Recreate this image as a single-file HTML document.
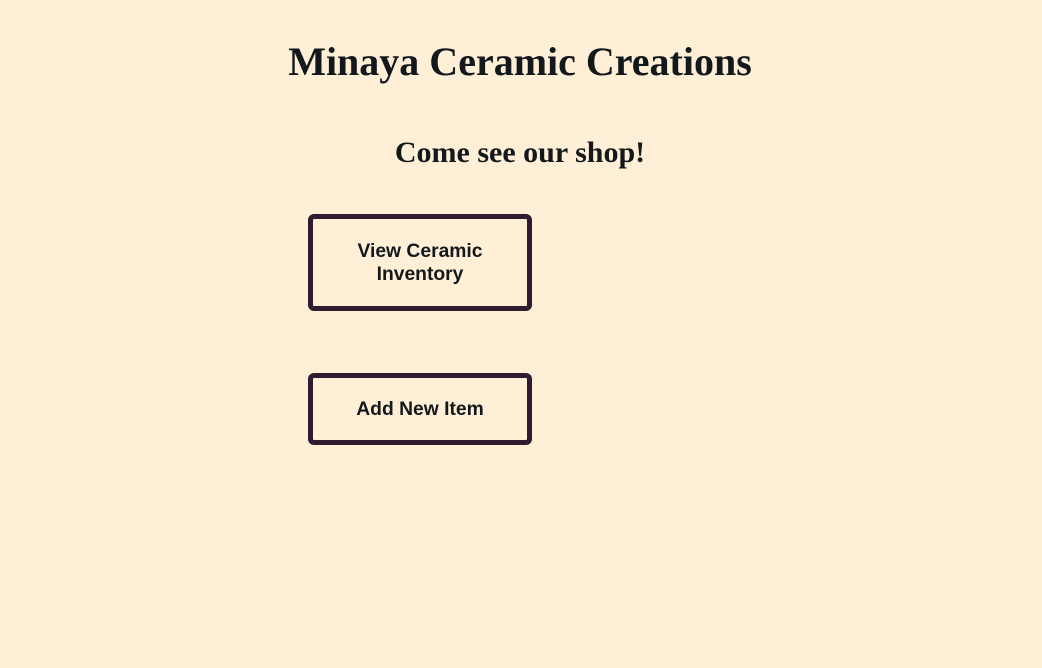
<!DOCTYPE html>
<html><head><style>
body{margin:0;background:#feefd6;width:1042px;height:668px;position:relative;font-family:"Liberation Serif",serif;color:#13181c}
h1{position:absolute;top:38px;left:0;width:1040px;text-align:center;margin:0;font-size:40px;line-height:48px}
h2{position:absolute;top:135px;left:0;width:1040px;text-align:center;margin:0;font-size:30px;line-height:36px}
.b{position:absolute;left:308px;width:214px;border:5px solid #321a31;border-radius:6px;box-sizing:content-box;display:flex;align-items:center;justify-content:center;text-align:center;font:bold 19.3px/23px "Liberation Sans",sans-serif;color:#13181c}
</style></head><body>
<h1>Minaya Ceramic Creations</h1>
<h2>Come see our shop!</h2>
<div class="b" style="top:214px;height:87px">View Ceramic<br>Inventory</div>
<div class="b" style="top:373px;height:62px">Add New Item</div>
</body></html>
